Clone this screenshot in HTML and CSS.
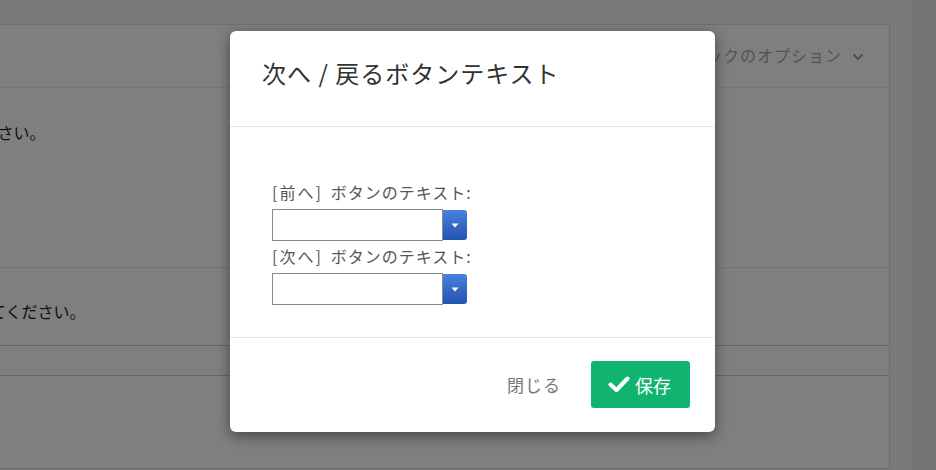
FILE: index.html
```html
<!DOCTYPE html>
<html lang="ja">
<head>
<meta charset="utf-8">
<title>次へ / 戻るボタンテキスト</title>
<link rel="stylesheet" href="styles.css">
</head>
<body>
<div class="page">
  <div class="top-gap"></div>
  <div class="layout">
    <div class="card">
      <div class="card-head">
        <span class="opt-text">ブロックのオプション</span>
        <svg class="chev" width="12" height="8" viewBox="0 0 12 8"><polyline points="1.5,1.5 6,6 10.5,1.5" fill="none" stroke="#999" stroke-width="1.8"/></svg>
      </div>
      <div class="sec sec1"><p class="sec-text">次のテキストを入力してください。</p></div>
      <div class="sec sec2"><p class="sec-text">表示するテキストを入力してください。</p></div>
      <div class="sec sec3"></div>
      <div class="sec sec4"></div>
    </div>
    <div class="gap-col"></div>
    <div class="side"></div>
  </div>
</div>
<div class="overlay"></div>
<div class="modal">
  <div class="modal-head">
    <h2 class="modal-title">次へ / 戻るボタンテキスト</h2>
  </div>
  <div class="modal-body">
    <label class="lbl"><span class="tag">[前へ]</span>ボタンのテキスト:</label>
    <div class="combo">
      <input class="field" type="text">
      <span class="drop"><svg width="8" height="5" viewBox="0 0 8 5"><polygon points="0.5,0.5 7.5,0.5 4,4.5" fill="#fff"/></svg></span>
    </div>
    <label class="lbl"><span class="tag">[次へ]</span>ボタンのテキスト:</label>
    <div class="combo">
      <input class="field" type="text">
      <span class="drop"><svg width="8" height="5" viewBox="0 0 8 5"><polygon points="0.5,0.5 7.5,0.5 4,4.5" fill="#fff"/></svg></span>
    </div>
  </div>
  <div class="modal-foot">
    <button class="btn-close" type="button">閉じる</button>
    <button class="btn-save" type="button">
      <svg width="22" height="17" viewBox="0 0 22 17"><polyline points="2.5,8.5 8.5,14 19.5,2.5" fill="none" stroke="#fff" stroke-width="4" stroke-linecap="round" stroke-linejoin="round"/></svg>
      <span>保存</span>
    </button>
  </div>
</div>
</body>
</html>
```

FILE: styles.css
```css
html, body {
  margin: 0;
  padding: 0;
}
body {
  width: 936px;
  height: 470px;
  overflow: hidden;
  position: relative;
  font-family: "Noto Sans CJK JP", "Noto Sans", sans-serif;
  background: #f5f5f5;
}
.page {
  height: 470px;
  display: flex;
  flex-direction: column;
}
.top-gap {
  height: 24px;
  flex: 0 0 auto;
}
.layout {
  flex: 1;
  display: flex;
}
.card {
  margin-left: -222px;
  width: 1112px;
  box-sizing: border-box;
  background: #fff;
  border: 1px solid #dcdcdc;
  height: 445px;
  display: flex;
  flex-direction: column;
  flex: 0 0 auto;
}
.card-head {
  height: 63px;
  border-bottom: 1px solid #ececec;
  display: flex;
  align-items: center;
  justify-content: flex-end;
  padding-right: 25px;
  gap: 10px;
  padding-bottom: 2px;
  box-sizing: border-box;
}
.opt-text {
  font-size: 16px;
  letter-spacing: 1px;
  color: #a8a8a8;
}
.chev {
  margin-top: 3px;
}
.sec {
  border-bottom: 1px solid #cfcfcf;
  padding-left: 20px;
  box-sizing: border-box;
}
.sec-text {
  margin: 0;
  font-size: 16px;
  line-height: 24px;
  color: #1c1c1c;
}
.sec1 {
  height: 180px;
  padding-top: 32px;
  padding-left: 12px;
  border-bottom-color: #e8e8e8;
}
.sec2 {
  height: 78px;
  padding-top: 31px;
}
.sec3 {
  height: 30px;
}
.sec4 {
  flex: 1;
  border-bottom: none;
}
.gap-col {
  width: 23px;
  flex: 0 0 auto;
}
.side {
  flex: 1;
  margin-top: -24px;
  background: #e8e8e8;
  border-left: 1px solid #dedede;
}
.overlay {
  position: absolute;
  inset: 0;
  background: rgba(0, 0, 0, 0.5);
}
.modal {
  position: absolute;
  left: 230px;
  top: 31px;
  width: 485px;
  height: 401px;
  background: #fff;
  border-radius: 6px;
  box-shadow: 0 4px 14px rgba(0, 0, 0, 0.45);
  display: flex;
  flex-direction: column;
}
.modal-head {
  height: 96px;
  box-sizing: border-box;
  padding: 24px 32px 0;
  border-bottom: 1px solid #e7e7e7;
}
.modal-title {
  margin: 0;
  font-size: 24px;
  line-height: 36px;
  font-weight: normal;
  color: #333;
  letter-spacing: 1px;
}
.modal-body {
  height: 210px;
  box-sizing: border-box;
  padding: 53px 42px 0;
  display: flex;
  flex-direction: column;
  align-items: flex-start;
}
.lbl {
  display: block;
  font-size: 16px;
  line-height: 24px;
  color: #555;
  margin-bottom: 5px;
  letter-spacing: 1px;
}
.tag {
  letter-spacing: 2px;
  margin-right: 8px;
}
.combo {
  display: flex;
  align-items: center;
  margin-bottom: 3px;
}
.field {
  width: 171px;
  height: 32px;
  box-sizing: border-box;
  border: 1px solid #8a8a8a;
  margin: 0;
  padding: 0 4px;
  background: #fff;
  font: inherit;
}
.drop {
  width: 24px;
  height: 30px;
  border-radius: 0 3px 3px 0;
  background: linear-gradient(#4b80dc, #2352b3);
  display: flex;
  align-items: center;
  justify-content: center;
}
.modal-foot {
  flex: 1;
  border-top: 1px solid #e7e7e7;
  display: flex;
  justify-content: flex-end;
  align-items: flex-start;
  padding: 23px 25px 0 0;
  gap: 30px;
}
.btn-close {
  border: none;
  background: none;
  padding: 0;
  margin: 0;
  height: 47px;
  font-family: inherit;
  font-size: 17px;
  color: #777;
  letter-spacing: 1px;
  cursor: pointer;
}
.btn-save {
  width: 99px;
  height: 47px;
  border: none;
  border-radius: 3px;
  background: #10b46f;
  color: #fff;
  font-family: inherit;
  font-size: 18px;
  display: flex;
  align-items: center;
  justify-content: center;
  gap: 5px;
  padding: 0 2px 0 0;
  margin: 0;
}
```
